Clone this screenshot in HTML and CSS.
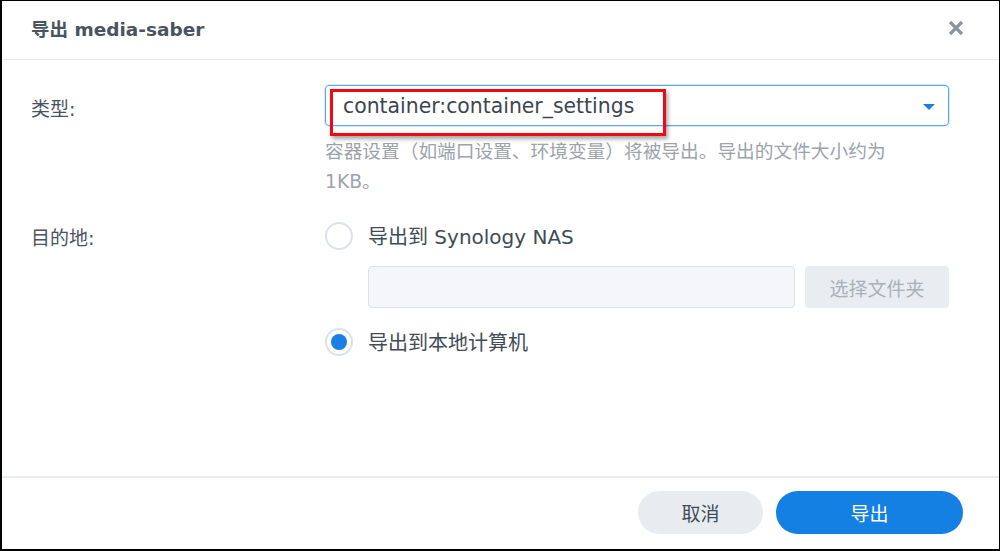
FILE: index.html
```html
<!DOCTYPE html>
<html lang="zh-CN">
<head>
<meta charset="utf-8">
<title>导出 media-saber</title>
<link rel="stylesheet" href="styles.css">
</head>
<body>
<div class="frame">
  <header class="header">
    <div class="title">导出 media-saber</div>
    <button class="close" aria-label="关闭">
      <svg width="16" height="16" viewBox="0 0 16 16"><path d="M2 2 L14 14 M14 2 L2 14" stroke="#8c949e" stroke-width="3.2" stroke-linecap="butt" fill="none"/></svg>
    </button>
  </header>
  <main class="body">
    <div class="row">
      <div class="label label-type">类型:</div>
      <div class="control">
        <div class="select">
          <span class="select-text">container:container_settings</span>
          <span class="caret"></span>
          <span class="highlight"></span>
        </div>
        <p class="help">容器设置（如端口设置、环境变量）将被导出。导出的文件大小约为1KB。</p>
      </div>
    </div>
    <div class="row row-dest">
      <div class="label label-dest">目的地:</div>
      <div class="control">
        <div class="radio-row">
          <span class="radio"></span>
          <span class="radio-label">导出到 Synology NAS</span>
        </div>
        <div class="path-row">
          <div class="path-input"></div>
          <button class="folder-btn">选择文件夹</button>
        </div>
        <div class="radio-row radio-row-2">
          <span class="radio checked"></span>
          <span class="radio-label">导出到本地计算机</span>
        </div>
      </div>
    </div>
  </main>
  <footer class="footer">
    <button class="btn btn-cancel">取消</button>
    <button class="btn btn-primary">导出</button>
  </footer>
</div>
</body>
</html>
```
FILE: styles.css
```css
* { box-sizing: border-box; }
html, body { margin: 0; padding: 0; background: #fff; }
body {
  font-family: "DejaVu Sans", "Noto Sans CJK SC", sans-serif;
  color: #414b55;
}
.frame {
  width: 1000px;
  height: 551px;
  border-top: 1px solid #000;
  border-left: 2px solid #000;
  border-right: 1px solid #000;
  border-bottom: 2px solid #000;
  display: flex;
  flex-direction: column;
  background: #fff;
}
.header {
  height: 59px;
  border-bottom: 1px solid #e4e9ef;
  display: flex;
  align-items: center;
  justify-content: space-between;
  padding: 0 35px 0 29px;
  flex-shrink: 0;
}
.title {
  font-size: 18.5px;
  font-weight: bold;
  color: #4a5360;
  margin-top: -5px;
}
.close {
  border: 0;
  background: transparent;
  padding: 0;
  width: 16px;
  height: 16px;
  margin-top: -5px;
  display: flex;
}
.body {
  padding: 25px 50px 0 29px;
  flex: 1;
}
.row { display: flex; }
.label {
  width: 294px;
  flex-shrink: 0;
  font-size: 19px;
  color: #4a5360;
}
.label-type { padding-top: 9px; }
.label-dest { padding-top: 1px; }
.control { flex: 1; }
.select {
  position: relative;
  height: 41px;
  border: 1px solid #5aa6f2;
  border-radius: 4px;
  display: flex;
  align-items: center;
  padding-left: 17px;
  box-shadow: 0 0 0 1px rgba(90,166,242,0.25);
}
.select-text {
  font-size: 20.4px;
  color: #3c4550;
  margin-top: 1px;
}
.caret {
  position: absolute;
  right: 13px;
  top: 18px;
  width: 0;
  height: 0;
  border-left: 6px solid transparent;
  border-right: 6px solid transparent;
  border-top: 6px solid #1a7ee6;
}
.highlight {
  position: absolute;
  left: 4px;
  top: 3px;
  width: 336px;
  height: 47px;
  border: 3px solid #ee0a10;
  box-shadow: 2px 3px 4px rgba(0,0,0,0.35);
  pointer-events: none;
}
.help {
  margin: 11px 0 0 0;
  font-size: 18.7px;
  line-height: 30px;
  color: #9ca3ab;
  width: 580px;
}
.row-dest { margin-top: 25px; }
.radio-row {
  display: flex;
  align-items: center;
  height: 28px;
}
.radio {
  width: 28px;
  height: 28px;
  border: 2px solid #dbe2ea;
  border-radius: 50%;
  flex-shrink: 0;
  position: relative;
  background: #fff;
}
.radio.checked::after {
  content: "";
  position: absolute;
  left: 4px;
  top: 4px;
  width: 16px;
  height: 16px;
  border-radius: 50%;
  background: #1a7ee6;
}
.radio-label {
  margin-left: 15px;
  font-size: 20px;
  color: #414b55;
  margin-top: -2px;
}
.path-row {
  display: flex;
  gap: 10px;
  margin: 16px 0 0 43px;
}
.path-input {
  width: 427px;
  height: 42px;
  background: #f4f6f9;
  border: 1px solid #dae2ea;
  border-radius: 4px;
}
.folder-btn {
  width: 144px;
  height: 42px;
  border: 0;
  border-radius: 4px;
  background: #e9edf2;
  color: #a9b0b8;
  font-family: "Noto Sans CJK SC", sans-serif;
  font-size: 19px;
}
.radio-row-2 { margin-top: 20px; }
.footer {
  height: 73px;
  border-top: 2px solid #e8ecf1;
  display: flex;
  justify-content: flex-end;
  align-items: center;
  gap: 13px;
  padding: 0 36px 3px 0;
  flex-shrink: 0;
}
.btn {
  height: 43px;
  border: 0;
  border-radius: 22px;
  font-family: "Noto Sans CJK SC", sans-serif;
  font-size: 19px;
}
.btn-cancel {
  width: 125px;
  background: #e8ecf1;
  color: #414b55;
}
.btn-primary {
  width: 187px;
  background: #1580e3;
  color: #fff;
}
```
